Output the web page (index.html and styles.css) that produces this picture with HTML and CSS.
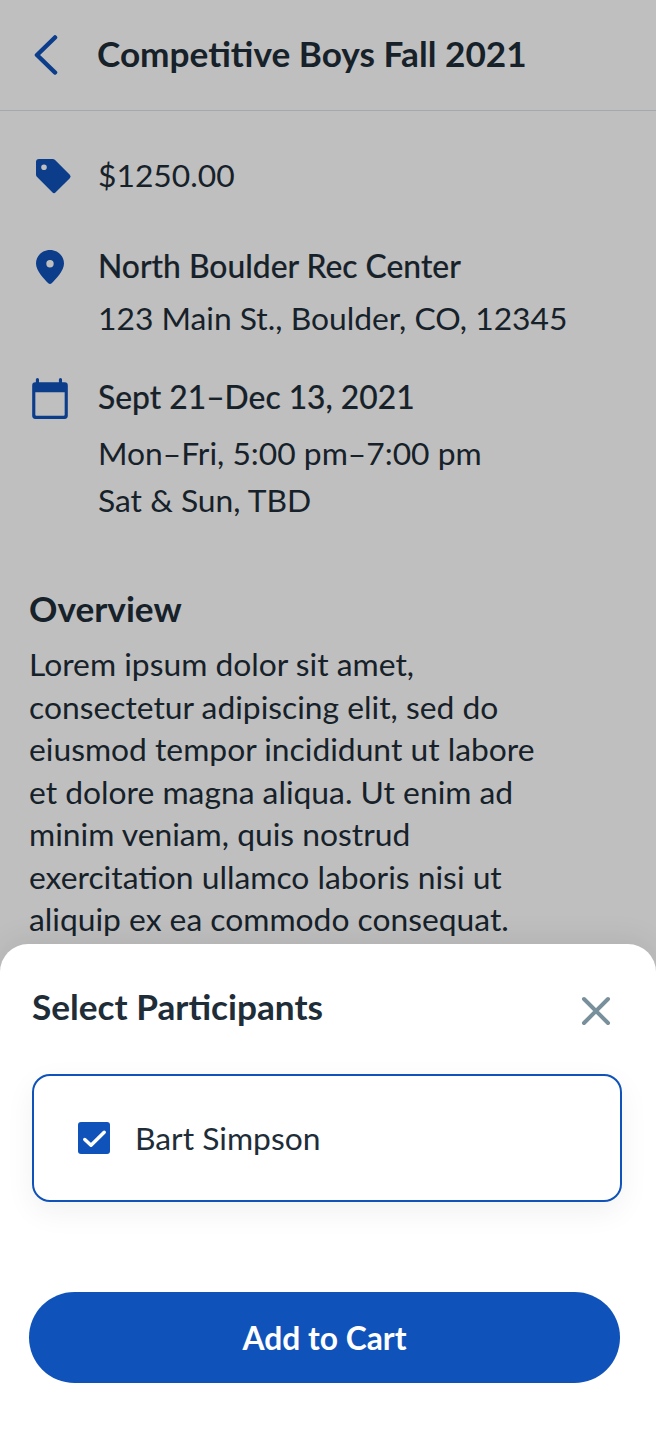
FILE: index.html
```html
<!DOCTYPE html>
<html lang="en">
<head>
<meta charset="UTF-8" />
<meta name="viewport" content="width=device-width, initial-scale=1" />
<title>Competitive Boys Fall 2021</title>
<link rel="stylesheet" href="styles.css">
</head>
<body>

<header class="topbar">
  <svg class="back-icon" width="26" height="40" viewBox="0 0 26 40"><path d="M23 2.500 5 20l18 17.500" fill="none" stroke="#0f52ba" stroke-width="4.500" stroke-linecap="round" stroke-linejoin="round"/></svg>
  <h1 class="topbar-title">Competitive Boys Fall 2021</h1>
</header>

<main class="details">
  <div class="info-row info-price">
    <svg class="info-icon icon-tag" width="38" height="38" viewBox="0 0 38 38"><path fill-rule="evenodd" fill="#0f52ba" d="M5 1h13.500q1.500 0 2.600 1.100L35.800 16.800q1.700 1.700 0 3.400L21.700 34.300q-1.700 1.700-3.400 0L3.100 19.100Q2 18 2 16.500V4q0-3 3-3Zm5 5.500a2.800 2.800 0 1 0 0 5.600 2.800 2.800 0 0 0 0-5.600Z"/></svg>
    <div class="info-text"><p class="info-line">$1250.00</p></div>
  </div>
  <div class="info-row info-place">
    <svg class="info-icon icon-pin" width="38" height="38" viewBox="0 0 38 38"><path fill-rule="evenodd" fill="#0f52ba" d="M17 2C9.300 2 3 7.800 3 15.600 3 23 11 31 15.300 35.300q1.700 1.600 3.400 0C23 31 31 23 31 15.600 31 7.800 24.700 2 17 2Zm0 10a3.700 3.700 0 1 1 0 7.400 3.700 3.700 0 0 1 0-7.400Z"/></svg>
    <div class="info-text">
      <p class="info-line info-strong">North Boulder Rec Center</p>
      <p class="info-line info-second">123 Main St., Boulder, CO, 12345</p>
    </div>
  </div>
  <div class="info-row info-date">
    <svg class="info-icon icon-cal" width="40" height="44" viewBox="0 0 38 42"><path fill="#0f52ba" fill-rule="evenodd" d="M7 1q1.500 0 1.500 1.500V5h19V2.500q0-1.500 1.500-1.500t1.500 1.500V5H33q3 0 3 3v29q0 3-3 3H5q-3 0-3-3V8q0-3 3-3h.5V2.500Q5.500 1 7 1ZM5 14.500V36q0 1 1 1h26q1 0 1-1V14.500Z"/></svg>
    <div class="info-text">
      <p class="info-line info-strong">Sept 21–Dec 13, 2021</p>
      <p class="info-line info-hours">Mon–Fri, 5:00 pm–7:00 pm</p>
      <p class="info-line info-weekend">Sat &amp; Sun, TBD</p>
    </div>
  </div>

  <h2 class="overview-title">Overview</h2>
  <p class="overview-text">Lorem ipsum dolor sit amet,<br>consectetur adipiscing elit, sed do<br>eiusmod tempor incididunt ut labore<br>et dolore magna aliqua. Ut enim ad<br>minim veniam, quis nostrud<br>exercitation ullamco laboris nisi ut<br>aliquip ex ea commodo consequat.</p>
</main>

<div class="scrim"></div>

<section class="sheet">
  <div class="sheet-head">
    <h2 class="sheet-title">Select Participants</h2>
    <svg class="close-icon" width="30" height="30" viewBox="0 0 30 30"><path d="M3 3l24 24M27 3 3 27" fill="none" stroke="#78909c" stroke-width="4" stroke-linecap="round"/></svg>
  </div>
  <label class="participant">
    <span class="checkbox"><svg width="32" height="32" viewBox="0 0 32 32"><path d="M6.800 17.500 13 23.200 26.200 10.300" fill="none" stroke="#fff" stroke-width="3.500" stroke-linecap="round" stroke-linejoin="round"/></svg></span>
    <span class="participant-name">Bart Simpson</span>
  </label>
  <button class="cart-btn">Add to Cart</button>
</section>

</body>
</html>
```

FILE: styles.css
```css
* {
  box-sizing: border-box;
}
html, body {
  margin: 0;
  height: 1430px;
  overflow: hidden;
}
body {
  position: relative;
  font-family: Lato, "Noto Sans", sans-serif;
  font-feature-settings: "liga" 1;
  background: #fff;
  color: #1e2d38;
}
p, h1, h2 {
  margin: 0;
}
.topbar {
  display: flex;
  align-items: center;
  height: 111px;
  padding: 0 0 1px 32px;
  border-bottom: 1px solid #dbe2e8;
}
.back-icon {
  margin-right: 39px;
}
.topbar-title {
  margin-bottom: 3px;
  font-size: 35.200px;
  font-weight: 700;
  line-height: 44px;
}
.details {
  padding: 41px 30px 0;
}
.info-row {
  display: flex;
  align-items: flex-start;
}
.info-icon {
  flex: none;
}
.icon-tag {
  margin: 6px 26px 0 4px;
}
.icon-pin {
  margin: 5px 27px 0 3px;
}
.icon-cal {
  margin: 3px 28px 0 0;
}
.info-place {
  margin-top: 45px;
}
.info-date {
  margin-top: 33px;
}
.info-line {
  font-size: 31.800px;
  line-height: 46px;
}
.info-strong {
  font-weight: 500;
  -webkit-text-stroke: 0.15px #1e2d38;
}
.info-second {
  margin-top: 6px;
}
.info-hours {
  margin-top: 10px;
}
.info-weekend {
  margin-top: 1px;
}
.overview-title {
  margin: 63px 0 0 -1px;
  font-size: 35.200px;
  font-weight: 700;
  line-height: 44px;
}
.overview-text {
  margin: 13px 0 0 -1px;
  font-size: 31.800px;
  line-height: 42.500px;
}
.scrim {
  position: absolute;
  inset: 0;
  background: rgba(0, 0, 0, 0.25);
}
.sheet {
  position: absolute;
  left: 0;
  right: 0;
  bottom: 0;
  height: 486px;
  padding: 40px 34px 0 32px;
  background: #fff;
  border-radius: 28px 28px 0 0;
  box-shadow: 0 -4px 30px rgba(0, 0, 0, 0.08);
}
.sheet-head {
  display: flex;
  align-items: center;
  justify-content: space-between;
  height: 46px;
}
.sheet-title {
  margin-bottom: 3px;
  font-size: 35.200px;
  font-weight: 700;
  line-height: 44px;
}
.close-icon {
  margin: 8px 11px 0 0;
}
.participant {
  display: flex;
  align-items: center;
  height: 128px;
  margin-top: 44px;
  padding-left: 44px;
  border: 2px solid #0f52ba;
  border-radius: 18px;
  box-shadow: 0 10px 30px rgba(0, 0, 0, 0.06);
}
.checkbox {
  display: flex;
  width: 32px;
  height: 32px;
  margin-right: 25px;
  background: #0f52ba;
  border-radius: 3px;
}
.participant-name {
  margin-bottom: 1px;
  font-size: 31.800px;
}
.cart-btn {
  display: block;
  width: 591px;
  height: 91px;
  margin: 90px 0 0 -3px;
  border: none;
  border-radius: 46px;
  background: #0f52ba;
  color: #fff;
  font-family: inherit;
  font-size: 31.800px;
  font-weight: 700;
}
```
